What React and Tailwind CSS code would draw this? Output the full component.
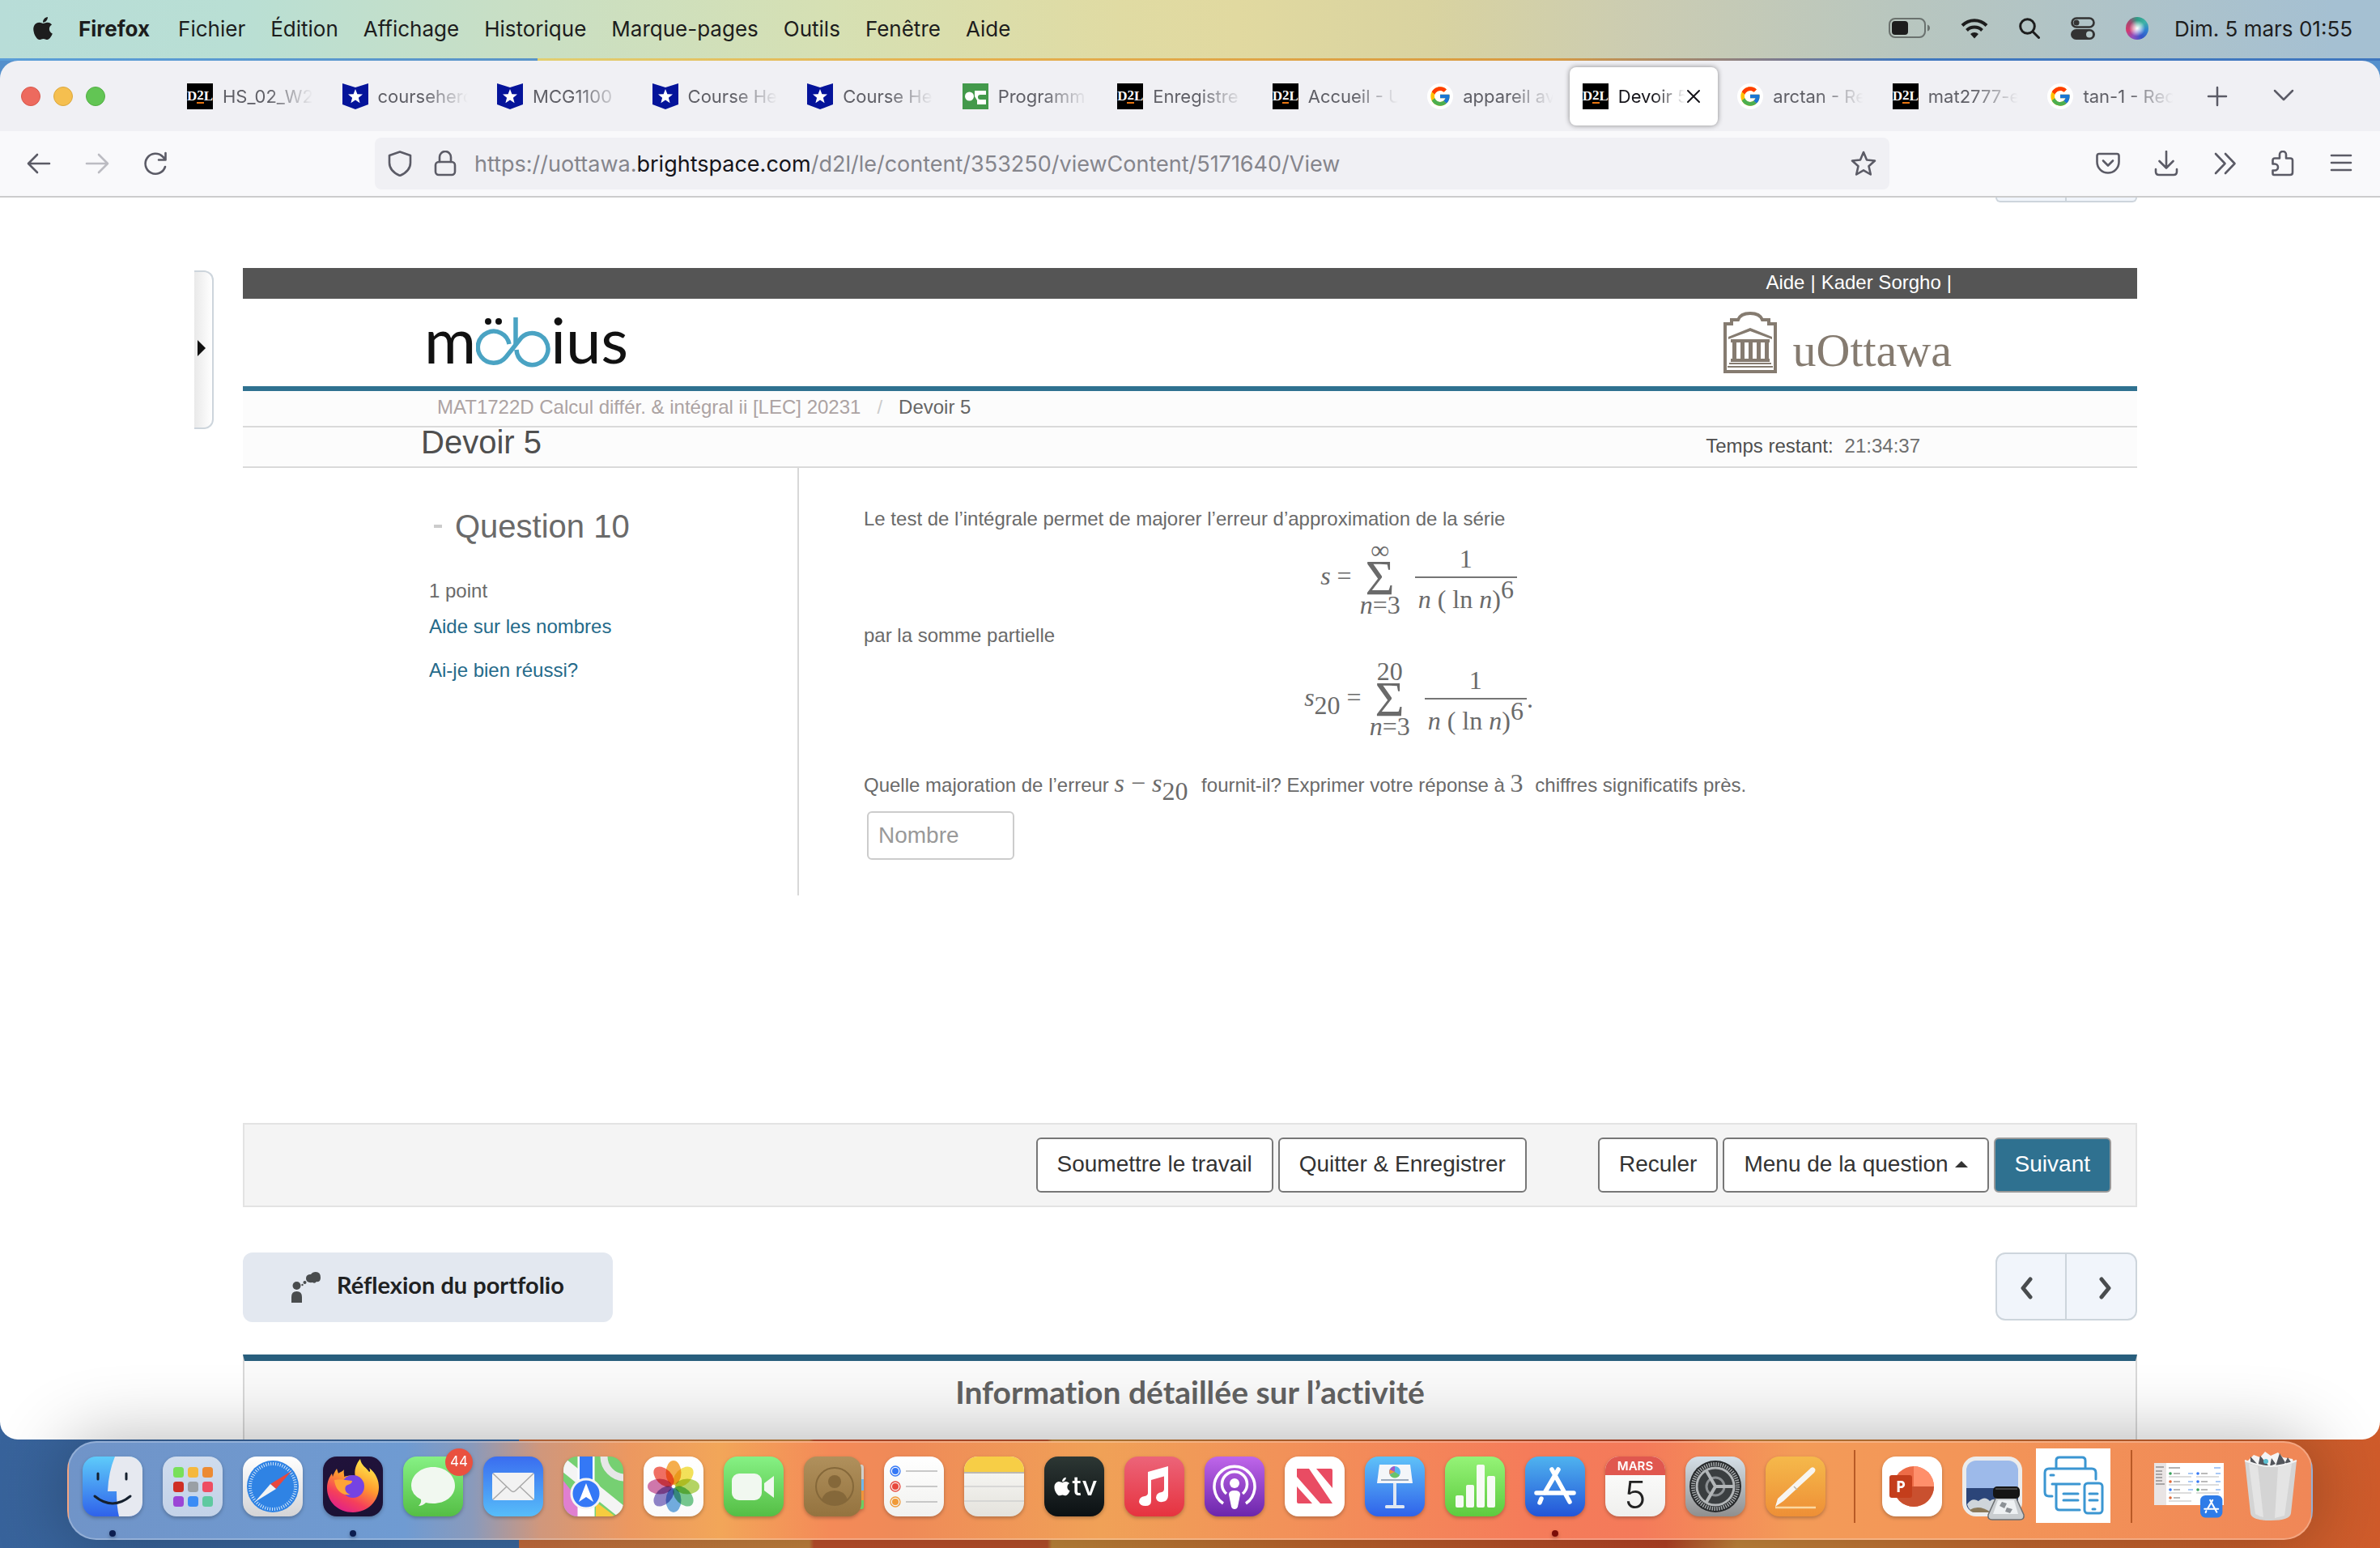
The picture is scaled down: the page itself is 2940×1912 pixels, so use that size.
import React, { useState } from 'react'
import { FaApple } from 'react-icons/fa'
import { FcGoogle } from 'react-icons/fc'

const MENUS = ['Fichier', 'Édition', 'Affichage', 'Historique', 'Marque-pages', 'Outils', 'Fenêtre', 'Aide']

const TABS = [
  { icon: 'd2l', title: 'HS_02_W2' },
  { icon: 'hero', title: 'coursehero' },
  { icon: 'hero', title: 'MCG1100' },
  { icon: 'hero', title: 'Course He' },
  { icon: 'hero', title: 'Course He' },
  { icon: 'prog', title: 'Programm' },
  { icon: 'd2l', title: 'Enregistre' },
  { icon: 'd2l', title: 'Accueil - U' },
  { icon: 'google', title: 'appareil av' },
  { icon: 'd2l', title: 'Devoir 5' },
  { icon: 'google', title: 'arctan - Re' },
  { icon: 'd2l', title: 'mat2777-e' },
  { icon: 'google', title: 'tan-1 - Rec' },
]

const line = { fill: 'none', stroke: 'currentColor', strokeLinecap: 'round', strokeLinejoin: 'round' }

/* ---------- menu bar ---------- */

function StatusIcons() {
  return (
    <div className="flex items-center gap-[38px]">
      <svg width="51" height="26" viewBox="0 0 51 26">
        <rect x="1" y="1" width="44" height="23" rx="7" fill="none" stroke="#1d1d1d" strokeOpacity="0.5" strokeWidth="2" />
        <rect x="4" y="4" width="20" height="17" rx="4" fill="#1d1d1d" />
        <path d="M48 8.500q3 1 3 4t-3 4z" fill="#1d1d1d" fillOpacity="0.5" />
      </svg>
      <svg width="34" height="26" viewBox="0 0 34 26" fill="none" stroke="#1d1d1d" strokeWidth="4">
        <path d="M2 9.500a21 21 0 0 1 30 0" />
        <path d="M7.500 15.500a13.500 13.500 0 0 1 19 0" />
        <path d="M17 25.500l-5-5.500a7 7 0 0 1 10 0z" fill="#1d1d1d" stroke="none" />
      </svg>
      <svg width="26" height="26" viewBox="0 0 26 26" {...line} stroke="#1d1d1d" strokeWidth="3">
        <circle cx="10.500" cy="10.500" r="8.800" />
        <path d="M17 17l7.500 7.500" />
      </svg>
      <svg width="30" height="28" viewBox="0 0 30 28">
        <rect x="1.500" y="1.500" width="27" height="11" rx="5.500" fill="none" stroke="#333" strokeWidth="2.600" />
        <circle cx="7" cy="7" r="3.500" fill="#333" />
        <rect x="0" y="15" width="30" height="13" rx="6.500" fill="#333" />
        <circle cx="23" cy="21.500" r="4" fill="#b3c5c6" />
      </svg>
      <span className="size-7 rounded-full bg-[radial-gradient(circle_at_50%_50%,#fff_0,#ffffff88_25%,transparent_50%),conic-gradient(#2d9c86,#3fb3a8,#2f7fd0,#3552c8,#8d4fc0,#d33a6e,#a5476f,#2d9c86)]" />
    </div>
  )
}

function MenuBar() {
  return (
    <header className="flex h-[72px] items-center bg-[linear-gradient(to_right,#b8ddd8_0%,#b9dfd4_10%,#c9dfc4_22%,#d6e0b3_35%,#e0dba3_47%,#e1d9a0_52%,#d9d3a0_60%,#cbccb2_69%,#b8c6bf_80%,#a5c0d2_98%)] pb-0.5 pl-[37px] pr-[34px] font-['Inter',sans-serif] text-[26px] text-[#1d1d1d]">
      <FaApple className="size-8" />
      <nav className="ml-7 flex gap-[31px]">
        <b className="mr-1 font-bold">Firefox</b>
        {MENUS.map(m => <span key={m}>{m}</span>)}
      </nav>
      <div className="ml-auto flex items-center gap-8">
        <StatusIcons />
        <span>Dim. 5 mars 01:55</span>
      </div>
    </header>
  )
}

/* ---------- browser chrome ---------- */

function Favicon({ kind }) {
  if (kind === 'google') return (
    <span className="flex size-8 shrink-0 items-center justify-center rounded-full bg-white"><FcGoogle className="size-7" /></span>
  )
  if (kind === 'hero') return (
    <svg className="size-8 shrink-0" viewBox="0 0 32 32">
      <path d="M0 0l16 5L32 0v26l-16 6L0 26z" fill="#05149a" />
      <path d="M16 7l2.400 6.200 6.600.3-5.100 4.200 1.700 6.500L16 20.500l-5.600 3.700 1.700-6.500L7 13.500l6.600-.3z" fill="#fff" />
    </svg>
  )
  if (kind === 'prog') return (
    <svg className="size-8 shrink-0" viewBox="0 0 32 32">
      <rect width="32" height="32" fill="#43994b" />
      <circle cx="8.500" cy="16" r="5.500" fill="#fff" />
      <path d="M15 9h14v5h-7a3 3 0 0 0 0 6h7v6H18v-5l-3-5z" fill="#fff" />
    </svg>
  )
  return (
    <span className="flex size-8 shrink-0 items-center justify-center bg-black font-['Liberation_Serif',serif] text-[17px] font-bold leading-none text-white">
      D<span className="border-b-2 border-[#e87511]">2</span>L
    </span>
  )
}

function TabStrip() {
  const [active, setActive] = useState(9)
  return (
    <div className="flex h-[87px] items-center bg-[#f0f0f4] pl-[26px] font-['Inter',sans-serif] text-[22px] text-[#5f5f66]">
      <div className="flex gap-4">
        <span className="size-6 rounded-full border border-[#d8574b] bg-[#ed6a5e]" />
        <span className="size-6 rounded-full border border-[#dba73d] bg-[#f5bf4f]" />
        <span className="size-6 rounded-full border border-[#52ae43] bg-[#62c554]" />
      </div>
      <div role="tablist" className="ml-[85px] flex max-w-[2490px] flex-1">
        {TABS.map((t, i) => (
          <div key={i} className="min-w-0 flex-1 pr-2">
            <button role="tab" aria-selected={i === active} onClick={() => setActive(i)}
              className={`flex h-[72px] w-full items-center gap-3 rounded-lg pl-4 ${i === active ? 'bg-white pr-5 text-[#15141a] shadow-[0_0_6px_rgba(0,0,0,0.45)]' : 'pr-3'}`}>
              <Favicon kind={t.icon} />
              <span className="min-w-0 flex-1 overflow-hidden whitespace-nowrap pt-0.5 text-left [mask-image:linear-gradient(to_right,#000_50%,transparent)]">{t.title}</span>
              {i === active && <svg className="-ml-3 size-5 shrink-0" viewBox="0 0 20 20" {...line} strokeWidth="2"><path d="M3 3l14 14M17 3L3 17" /></svg>}
            </button>
          </div>
        ))}
      </div>
      <div className="flex w-[235px] items-center gap-[54px] pl-5 text-[#5b5b66]">
        <svg className="size-7" viewBox="0 0 28 28" {...line} strokeWidth="2.500"><path d="M14 3v22M3 14h22" /></svg>
        <svg className="size-7" viewBox="0 0 28 28" {...line} strokeWidth="2.500"><path d="M3 7l11 11L25 7" /></svg>
      </div>
    </div>
  )
}

function Tool({ label, children, dim }) {
  return (
    <button aria-label={label} className={dim ? 'text-[#bcbcc2]' : 'text-[#5b5b66]'}>
      <svg className="size-8" viewBox="0 0 32 32" {...line} strokeWidth="2.600">{children}</svg>
    </button>
  )
}

function Toolbar() {
  return (
    <div className="flex h-[82px] items-center border-b-2 border-[#cccccd] bg-[#f9f9fb] pl-8 pr-8">
      <div className="flex w-[431px] gap-10">
        <Tool label="Précédent"><path d="M29 16H4M14 5L3 16l11 11" /></Tool>
        <Tool label="Suivant" dim><path d="M3 16h25M18 5l11 11-11 11" /></Tool>
        <Tool label="Actualiser"><path d="M28 20A12.500 12.500 0 1 1 25 7.500l3 3M28.500 3v8.500H20" /></Tool>
      </div>
      <div className="flex h-16 w-[1871px] items-center gap-6 rounded-lg bg-[#f0f0f4] pl-[15px] pr-4">
        <Tool label="Protection"><path d="M16 1.500L29 6v9c0 7-5 12.500-13 16C8 27.500 3 22 3 15V6z" /></Tool>
        <Tool label="Connexion sécurisée"><rect x="4" y="14" width="24" height="16" rx="4" /><path d="M9 14V8a7 7 0 0 1 14 0v6" /></Tool>
        <div className="-ml-1 flex-1 pt-0.5 font-['Inter',sans-serif] text-[27px] text-[#85858c]">
          https://uottawa.<span className="text-[#15141a]">brightspace.com</span>/d2l/le/content/353250/viewContent/5171640/View
        </div>
        <Tool label="Marquer cette page"><path d="M16 2l4 9.500 10 1-7.500 6.800 2.300 10.200L16 24.300 7.200 29.500l2.300-10.200L2 12.500l10-1z" /></Tool>
      </div>
      <div className="ml-auto flex gap-10">
        <Tool label="Pocket"><path d="M5 4h22q2.500 0 2.500 2.500V14a13.500 13.500 0 0 1-27 0V6.500Q2.500 4 5 4zM10 12.500l6 6 6-6" /></Tool>
        <Tool label="Téléchargements"><path d="M16 1v20M7.500 13l8.500 8.500 8.500-8.500M3 23v3q0 4 4 4h18q4 0 4-4v-3" /></Tool>
        <Tool label="Plus d’outils"><path d="M5 4l11.500 12L5 28M17 4l11.500 12L17 28" /></Tool>
        <Tool label="Extensions"><path d="M5 30h20q3 0 3-3V12q0-2.500-3-2.500h-5V5a4 4 0 0 0-8 0v4.500H6q-2.500 0-2.500 2.500v4.500H6a4 4 0 0 1 0 8H3.500V28q0 2 1.500 2z" /></Tool>
        <Tool label="Menu"><path d="M4 6h24M4 15h24M4 24h24" /></Tool>
      </div>
    </div>
  )
}

/* ---------- Möbius page ---------- */

function MobiusLogo() {
  return (
    <div className="flex h-24 items-center font-['Lato',sans-serif] text-[78px] leading-none text-[#111]">
      <span className="pb-2">m</span>
      <svg width="92" height="96" viewBox="0 0 92 96" fill="none" stroke="#4aa3c3" strokeWidth="5.500">
        <path d="M41 50A19.500 19.500 0 1 0 37 66L56 42A19.500 19.500 0 1 1 50 57" />
        <path d="M49 17v34" />
        <circle cx="15" cy="22" r="4" fill="#111" stroke="none" />
        <circle cx="28" cy="22" r="4" fill="#111" stroke="none" />
      </svg>
      <span className="pb-2">ius</span>
    </div>
  )
}

function OttawaLogo() {
  return (
    <div className="flex items-end gap-5 text-[#857b70]">
      <svg width="66" height="76" viewBox="0 0 66 76" fill="currentColor">
        <path d="M2 74V15h8v-5h8q3-8 15-8t15 8h8v5h8v59z" fill="none" stroke="currentColor" strokeWidth="4" />
        <path d="M6 31L33 20l27 11v3L33 24 6 34zM9 34h48v4H9zM9 58h48v4H9zM7 63h52v2H7zM5 67h56v2H5z" />
        <path d="M11 38h5v20h-5zM21 38h5v20h-5zM31 38h5v20h-5zM41 38h5v20h-5zM51 38h5v20h-5z" />
      </svg>
      <span className="font-['Liberation_Serif',serif] text-[58px] leading-[56px]">uOttawa</span>
    </div>
  )
}

function Sum({ from, to }) {
  return (
    <span className="flex flex-col items-center">
      <span className="leading-[26px]">{to}</span>
      <span className="text-[62px] leading-[42px]">Σ</span>
      <span className="leading-[26px]">{from}</span>
    </span>
  )
}

function Term() {
  return (
    <span className="ml-[18px] flex flex-col items-center pt-1">
      <span className="mb-2 leading-7">1</span>
      <span className="h-0.5 w-full bg-[#757575]" />
      <span className="mt-3 px-1 leading-7"><i>n</i> ( ln <i>n</i>)<sup className="-top-3 text-[32px]">6</sup></span>
    </span>
  )
}

function Formula({ children, to, end }) {
  return (
    <div className="flex h-28 items-center justify-center font-['Liberation_Serif',serif] text-[32px]">
      <span className="mr-2.5 pb-1">{children} =</span>
      <Sum to={to} from={<><i>n</i>=3</>} />
      <Term />
      {end}
    </div>
  )
}

function Action({ children, primary }) {
  return (
    <button className={`h-[68px] rounded-md border-2 px-6 pb-0.5 ${primary ? 'border-[#999] bg-[#2f7190] text-white' : 'border-[#777] bg-white text-[#333]'}`}>
      {children}
    </button>
  )
}

function Question() {
  return (
    <section className="flex text-2xl leading-8 text-[#6a6a6a]">
      <aside className="h-[528px] w-[687px] shrink-0 border-r-2 border-[#d8d8d8] pl-[230px] pt-12">
        <h2 className="flex items-center gap-4 text-[40px] leading-[48px]">
          <span className="ml-1.5 h-1 w-2.5 bg-[#ccc]" />Question 10
        </h2>
        <p className="mt-10">1 point</p>
        <p className="mt-3"><a href="#nombres" className="text-[#256a8a]">Aide sur les nombres</a></p>
        <p className="mt-[22px]"><a href="#verif" className="text-[#256a8a]">Ai-je bien réussi?</a></p>
      </aside>
      <div className="flex-1 pl-20 pr-[202px] pt-[47px]">
        <p>Le test de l’intégrale permet de majorer l’erreur d’approximation de la série</p>
        <Formula to="∞"><i>s</i></Formula>
        <p className="mb-1.5">par la somme partielle</p>
        <Formula to="20" end="."><i>s</i><sub className="-bottom-2.5 text-[32px]">20</sub></Formula>
        <p className="mt-8 whitespace-nowrap">
          Quelle majoration de l’erreur{' '}
          <span className="font-['Liberation_Serif',serif] text-[32px] leading-8"><i>s</i> − <i>s</i><sub className="-bottom-2.5 text-[32px]">20</sub></span>
          {' '}<label htmlFor="rep" className="ml-2.5">fournit-il? Exprimer votre réponse à </label>
          <span className="mr-2 font-['Liberation_Serif',serif] text-[32px] leading-8">3</span> chiffres significatifs près.
        </p>
        <input id="rep" placeholder="Nombre" className="ml-1 mt-4 h-[60px] w-[182px] rounded-md border-2 border-[#ccc] px-3 text-[28px] placeholder:text-[#999]" />
      </div>
    </section>
  )
}

function Page() {
  return (
    <main className="flex flex-1 flex-col bg-white font-['Liberation_Sans',Arial,sans-serif]">
      <div className="relative mx-auto flex w-full max-w-[2340px] flex-1 flex-col">
        <button aria-label="Ouvrir le panneau" className="absolute -left-[60px] top-[90px] flex h-[196px] w-6 items-center rounded-r-xl border-2 border-l-0 border-[#cdd5dc] bg-linear-to-r from-[#e9e9e9] to-white pb-1 pl-1">
          <svg width="10" height="20" viewBox="0 0 10 20"><path d="M0 0l10 10L0 20z" fill="#111" /></svg>
        </button>
        <div className="flex h-1.5 w-[175px] self-end rounded-b-lg border-2 border-t-0 border-[#cdd5dc] bg-[#f1f5fb]">
          <span className="w-1/2 border-r-2 border-[#cdd5dc]" />
        </div>
        <div className="mt-[81px] flex h-[38px] items-center justify-end bg-[#555] pb-0.5 pr-[229px] text-2xl text-white">
          <a href="#aide">Aide</a><span className="mx-[7px]">|</span><a href="#profil">Kader Sorgho</a><span className="ml-[7px]">|</span>
        </div>
        <div className="flex h-[114px] items-center justify-between border-b-6 border-[#2f7190] pl-[224px] pr-[229px]">
          <MobiusLogo />
          <OttawaLogo />
        </div>
        <nav className="flex h-[45px] items-center border-b-2 border-[#dadada] bg-[#fcfcfc] pb-1 pl-60 text-2xl text-[#aca3a3]">
          <a href="#cours">MAT1722D Calcul différ. &amp; intégral ii [LEC] 20231</a>
          <span className="mx-5 text-[#ccc]">/</span>
          <span className="text-[#666]">Devoir 5</span>
        </nav>
        <div className="flex h-[50px] items-center justify-between border-b-2 border-[#dadada] bg-[#fcfcfc] pl-[220px] pr-[268px] text-2xl text-[#4f4f4f]">
          <h1 className="pb-3 text-[40px] leading-10">Devoir 5</h1>
          <p className="pb-0.5">Temps restant:<span className="ml-3.5 text-[#6f6f6f]">21:34:37</span></p>
        </div>
        <Question />
        <div className="mt-[281px] flex h-[104px] items-center justify-end gap-1.5 border-2 border-[#e3e3e3] bg-[#f4f4f4] pr-[30px] text-[28px]">
          <Action>Soumettre le travail</Action>
          <Action>Quitter &amp; Enregistrer</Action>
          <span className="w-[76px]" />
          <Action>Reculer</Action>
          <Action>
            <span className="flex items-center gap-2">Menu de la question
              <svg width="16" height="8" viewBox="0 0 16 8"><path d="M0 8l8-8 8 8z" fill="#333" /></svg>
            </span>
          </Action>
          <Action primary>Suivant</Action>
        </div>
        <div className="mt-14 flex items-start justify-between font-['Lato',sans-serif]">
          <button className="flex h-[86px] items-center gap-5 rounded-xl bg-[#e3e8f0] px-[60px] text-[29px] font-bold text-[#202122]">
            <svg width="36" height="38" viewBox="0 0 36 38" fill="#494c4e">
              <circle cx="6.500" cy="17" r="5" />
              <path d="M0 38V31q0-7 6.500-7t6.500 7v7zM18 8q0-5 6-5 2-3 6-3 6 0 6 7 0 6-5 5-2 3-5 1-8 1-8-5z" />
              <circle cx="16.500" cy="13" r="2" /><circle cx="13.500" cy="16" r="1.200" />
            </svg>
            <span className="pb-1.5 [font-variant-ligatures:none]">Réflexion du portfolio</span>
          </button>
          <div className="flex rounded-xl border-2 border-[#cdd5dc] bg-[#f1f5fb] text-[#494c4e]">
            <button aria-label="Page précédente" className="flex h-20 w-[86px] items-center justify-center border-r-2 border-[#cdd5dc]">
              <svg className="mt-1 size-7" viewBox="0 0 28 28" {...line} strokeWidth="5"><path d="M13 3L4 14l9 11" /></svg>
            </button>
            <button aria-label="Page suivante" className="flex h-20 w-[85px] items-center justify-center">
              <svg className="mt-1 size-7" viewBox="0 0 28 28" {...line} strokeWidth="5"><path d="M14 3l9 11-9 11" /></svg>
            </button>
          </div>
        </div>
        <div className="mt-10 flex-1 border-x-2 border-t-8 border-x-[#d8d8d8] border-t-[#285e7d] bg-[#fafafa] pt-3.5 text-center">
          <h2 className="font-['Lato',sans-serif] text-[39px] font-bold leading-[48px] text-[#626262] [font-variant-ligatures:none]">Information détaillée sur l’activité</h2>
        </div>
      </div>
    </main>
  )
}

/* ---------- dock ---------- */

function Grad({ id, a, b }) {
  return (
    <>
      <defs><linearGradient id={id} x1="0" y1="0" x2="0" y2="1"><stop stopColor={a} /><stop offset="1" stopColor={b} /></linearGradient></defs>
      <rect width="74" height="74" rx="17" fill={`url(#${id})`} />
    </>
  )
}

const GRID = ['#78e05a', '#f5b83d', '#ec8a33', '#cf2f25', '#9aa0a5', '#ee4e62', '#9b45d6', '#3b8cf5', '#5fc9a0']
const PETALS = ['#f5a02e', '#f2dd3d', '#a9cf4a', '#5fbf7d', '#5aa0dc', '#7d6fc0', '#c9609f', '#ee5648']

function AppStoreMark() {
  return (
    <g stroke="#fff" strokeWidth="5.500" strokeLinecap="round">
      <path d="M41 16L24 45M33 16l22 40M14 45h46M20 52l-2 5" />
    </g>
  )
}

const APPS = [
  { name: 'Finder', dot: 'bg-[#0b1d4f]', art: <>
    <Grad id="finder" a="#5ecbfa" b="#2f62ea" />
    <path d="M40 0h17a17 17 0 0 1 17 17v40a17 17 0 0 1-17 17H45q-3-12-3-31H31q1-24 9-43z" fill="#e6e9f0" />
    <path d="M19 21v7M54 21v7" stroke="#15202e" strokeWidth="3" strokeLinecap="round" />
    <path d="M15 49q22 18 44 0" fill="none" stroke="#15202e" strokeWidth="3" strokeLinecap="round" />
  </> },
  { name: 'Launchpad', art: <>
    <Grad id="launch" a="#cfdcee" b="#c3d2e8" />
    {GRID.map((c, i) => <rect key={c} x={13 + (i % 3) * 18} y={13 + Math.floor(i / 3) * 18} width="13" height="13" rx="3.500" fill={c} />)}
  </> },
  { name: 'Safari', art: <>
    <Grad id="safari" a="#ffffff" b="#d4d4d6" />
    <circle cx="37" cy="37" r="32" fill="#2f83e4" />
    <circle cx="37" cy="37" r="28" fill="none" stroke="#d7e9fb" strokeWidth="4" strokeDasharray="1 1.930" />
    <path d="M60 18L41 40l-7-6z" fill="#e8483d" /><path d="M15 56l19-22 7 6z" fill="#f3f3f3" />
  </> },
  { name: 'Firefox', dot: 'bg-[#0b1d4f]', art: <>
    <Grad id="ffbg" a="#20123a" b="#1b1235" />
    <defs><linearGradient id="ff" x1="0.800" y1="0" x2="0.300" y2="1"><stop stopColor="#fff44f" /><stop offset="0.450" stopColor="#ff9a2e" /><stop offset="0.750" stopColor="#f5405a" /><stop offset="1" stopColor="#e0208a" /></linearGradient></defs>
    <path d="M46 3c1 8 8 11 11 16 2 0 1-3 0-5 9 7 12 16 12 24 0 17-14 31-32 31S5 56 5 39c0-8 3-14 6-18l1 4c1-4 3-7 5-10l2 6c2-2 5-2 7-5-1 5 1 8 0 9 6-2 10-2 14 0-2-8 1-16 6-22z" fill="url(#ff)" />
    <circle cx="37" cy="37" r="14" fill="#7543e3" />
    <path d="M14 29c8-2 13 0 22 1 0 5-6 4-8 7-2 4 1 9 6 10-12 2-19-7-20-18z" fill="#ffa436" />
  </> },
  { name: 'Messages', badge: '44', art: <>
    <Grad id="msg" a="#86f184" b="#55be45" />
    <path d="M37 13c15 0 27 10 27 23S52 58 37 58q-5 0-9-1-4 4-9 4 4-4 3-8-12-6-12-17c0-13 12-23 27-23z" fill="#f1f8f0" />
  </> },
  { name: 'Mail', art: <>
    <Grad id="mail" a="#3a6df0" b="#57bdf9" />
    <rect x="11" y="20" width="52" height="34" rx="3" fill="#f2f2f2" />
    <path d="M12 21l22 21q3 3 6 0l22-21M12 53l17-16M62 53L45 37" fill="none" stroke="#a9a9a9" strokeWidth="1.500" />
  </> },
  { name: 'Plans', art: <>
    <defs><clipPath id="sq"><rect width="74" height="74" rx="17" /></clipPath></defs>
    <g clipPath="url(#sq)">
      <rect width="74" height="74" fill="#76d072" />
      <path d="M0 30l35 44H0z" fill="#e07fd0" /><path d="M40 56l24 18H40z" fill="#f6cc3f" />
      <path d="M0 10l74 60" stroke="#f4f4f4" strokeWidth="15" />
      <circle cx="76" cy="0" r="26" fill="none" stroke="#e7e7e7" strokeWidth="9" />
      <path d="M28 0v74" stroke="#fff" strokeWidth="21" /><path d="M28 0v40" stroke="#3478f6" strokeWidth="16" />
    </g>
    <circle cx="28" cy="46" r="18" fill="#3478f6" stroke="#f4f4f4" strokeWidth="3" />
    <path d="M28 33l9 23-9-6-9 6z" fill="#fff" />
  </> },
  { name: 'Photos', art: <>
    <Grad id="photos" a="#ffffff" b="#fafafa" />
    {PETALS.map((c, i) => <ellipse key={c} cx="37" cy="20" rx="9.500" ry="15" fill={c} fillOpacity="0.850" transform={`rotate(${i * 45} 37 37)`} style={{ mixBlendMode: 'multiply' }} />)}
  </> },
  { name: 'FaceTime', art: <>
    <Grad id="face" a="#86f184" b="#55be45" />
    <rect x="10" y="21" width="37" height="33" rx="9" fill="#f1f8f0" /><path d="M50 33l12-9v27l-12-9z" fill="#f1f8f0" />
  </> },
  { name: 'Contacts', art: <>
    <path d="M60 10h11q3 0 3 4v14H60z" fill="#cfd0cc" /><path d="M60 28h14v14H60z" fill="#6fb8ec" />
    <path d="M60 42h14v12H60z" fill="#f0953a" /><path d="M60 54h14v8q0 3-3 3H60z" fill="#6ccf63" />
    <defs><linearGradient id="contacts" x1="0" y1="0" x2="0" y2="1"><stop stopColor="#b0905c" /><stop offset="1" stopColor="#94733f" /></linearGradient></defs>
    <rect width="71" height="74" rx="16" fill="url(#contacts)" />
    <circle cx="38" cy="37" r="23" fill="none" stroke="#85683a" strokeWidth="2" />
    <circle cx="38" cy="31" r="8" fill="#85683a" /><path d="M22 53q4-11 16-11t16 11q-7 7-16 7t-16-7z" fill="#85683a" />
  </> },
  { name: 'Rappels', art: <>
    <Grad id="remind" a="#ffffff" b="#f1f1ef" />
    {['#3478f6', '#e8483d', '#f09a37'].map((c, i) => <g key={c}>
      <circle cx="14" cy={18 + i * 19} r="4" fill={c} /><circle cx="14" cy={18 + i * 19} r="6" fill="none" stroke={c} strokeWidth="1.300" />
      <path d={`M27 ${18 + i * 19}h39`} stroke="#b9b9b9" strokeWidth="1.600" />
    </g>)}
  </> },
  { name: 'Notes', art: <>
    <Grad id="notes" a="#fbfbf9" b="#e4e2dc" />
    <path d="M0 19v-2A17 17 0 0 1 17 0h40a17 17 0 0 1 17 17v2z" fill="#f7ce46" />
    <path d="M0 20h74" stroke="#a8a59a" strokeWidth="1.500" /><path d="M0 37h74M0 55h74" stroke="#cfcfcf" strokeWidth="1.500" />
  </> },
  { name: 'TV', label: 'tv', art: <Grad id="tv" a="#2d3734" b="#0b1013" /> },
  { name: 'Musique', art: <>
    <Grad id="music" a="#ec6479" b="#e6333f" />
    <path d="M29 19l25-7v11l-21 6v26q0 6-7 6t-8-5q0-6 7-7 4-1 4-4zM49 23h5v25q0 7-7 8t-8-5q0-6 7-7 3-1 3-4z" fill="#fff" />
  </> },
  { name: 'Podcasts', art: <>
    <Grad id="pod" a="#bf66ea" b="#6c26ab" />
    <g fill="none" stroke="#fff" strokeWidth="3.500"><path d="M23 58a25 25 0 1 1 28 0" /><path d="M27 46a15.500 15.500 0 1 1 20 0" /></g>
    <circle cx="37" cy="33" r="6" fill="#fff" /><path d="M30 47q0-5 7-5t7 5l-3 15q-1 3-4 3t-4-3z" fill="#fff" />
  </> },
  { name: 'News', art: <>
    <Grad id="news" a="#ffffff" b="#ffffff" />
    <path d="M15 15h15l29 43H44L15 25zM39 15h18q2 0 2 2v22zM15 37l19 21H17q-2 0-2-2z" fill="#e94c63" />
  </> },
  { name: 'Keynote', art: <>
    <Grad id="key" a="#5fc2f8" b="#2f62ea" />
    <path d="M37 32v28" stroke="#dfe7f2" strokeWidth="4" /><rect x="25" y="60" width="24" height="4" rx="1.500" fill="#dfe7f2" />
    <path d="M18 10h38l3 23H15z" fill="#f4f6f9" /><path d="M20 28h34v2H20z" fill="#9aa9bd" />
    <circle cx="37" cy="19" r="7" fill="#57b4f0" /><path d="M37 19v-7a7 7 0 0 0-6 10z" fill="#a259c9" /><path d="M37 19l-6 4a7 7 0 0 0 12 0z" fill="#6ac46a" /><path d="M37 19l-6.500-3v6z" fill="#f09a37" />
  </> },
  { name: 'Numbers', art: <>
    <Grad id="num" a="#95f377" b="#5dcb3f" />
    <g fill="#f6fbf4"><rect x="13" y="48" width="10" height="15" rx="2" /><rect x="26" y="35" width="10" height="28" rx="2" /><rect x="39" y="10" width="10" height="53" rx="2" /><rect x="52" y="24" width="10" height="39" rx="2" /></g>
  </> },
  { name: 'App Store', dot: 'bg-[#7a0d08]', art: <><Grad id="store" a="#4fb3ef" b="#2355d8" /><AppStoreMark /></> },
  { name: 'Calendrier', calendar: true, art: <>
    <Grad id="cal" a="#ffffff" b="#efefed" />
    <path d="M0 23v-6A17 17 0 0 1 17 0h40a17 17 0 0 1 17 17v6z" fill="#e0574f" />
  </> },
  { name: 'Réglages', art: <>
    <Grad id="set" a="#d5e0e8" b="#8f8f8f" />
    <circle cx="37" cy="37" r="32" fill="#26292b" /><circle cx="37" cy="37" r="27.500" fill="none" stroke="#a3a7a9" strokeWidth="5" strokeDasharray="1.500 1.380" />
    <circle cx="37" cy="37" r="23" fill="#3a3e40" stroke="#b2b6b8" strokeWidth="3" />
    <circle cx="37" cy="37" r="11" fill="none" stroke="#8b8f92" strokeWidth="3" />
    <path d="M37 37h23M37 37L25.500 17M37 37L25.500 57" stroke="#b2b6b8" strokeWidth="4" />
  </> },
  { name: 'Pages', art: <>
    <Grad id="pages" a="#f5b94b" b="#ee8f36" />
    <path d="M12 63h50" stroke="#fbd8a0" strokeWidth="2.500" />
    <path d="M12 62l3-10 39-36q3-4 6-2t0 6L22 55z" fill="#f7f5f1" /><path d="M35 37l4 4" stroke="#b8b3a8" strokeWidth="1.500" />
  </> },
]

function DockApp({ app }) {
  return (
    <button aria-label={app.name} className="relative size-[74px] drop-shadow-[0_2px_2px_rgba(0,0,0,0.25)]">
      <svg className="size-full" viewBox="0 0 74 74">{app.art}</svg>
      {app.label && <span className="absolute inset-0 flex items-center justify-center font-['Inter',sans-serif] text-[33px] font-medium text-white"><FaApple className="size-[26px]" />{app.label}</span>}
      {app.calendar && (
        <span className="absolute inset-0 flex flex-col items-center font-['Inter',sans-serif]">
          <span className="text-[15px] font-semibold leading-6 text-white">MARS</span>
          <span className="text-[46px] font-light leading-[46px] text-[#222]">5</span>
        </span>
      )}
      {app.badge && <span className="absolute -right-3 -top-2.5 flex size-[34px] items-center justify-center rounded-full bg-[#e9513f] font-['Inter',sans-serif] text-[17px] text-white">{app.badge}</span>}
      {app.dot && <span className={`absolute -bottom-[25px] left-[33px] size-2 rounded-full ${app.dot}`} />}
    </button>
  )
}

function Dock() {
  return (
    <footer className="relative z-10 mx-auto mb-2.5 mt-0.5 flex h-[122px] items-center gap-[25px] rounded-[36px] border-2 border-white/25 bg-[linear-gradient(to_right,#7094c8_0%,#6f9bd2_15%,#8a9abb_18%,#d0977c_21%,#ec9860_25%,#f2a659_29%,#f48a58_34%,#ef8a58_37%,#f0a157_46%,#f29259_54%,#f57c5a_65%,#f47a5a_70%,#f39b58_77%,#f39558_85%,#f08757_100%)] px-[17px] pb-[10px] shadow-[0_0_90px_rgba(0,0,0,0.3)]">
      {APPS.map(a => <DockApp key={a.name} app={a} />)}
      <span className="ml-2.5 mr-2 h-[90px] w-0.5 bg-[#b85a26]" />
      <button aria-label="PowerPoint" className="relative size-[74px] drop-shadow-[0_2px_2px_rgba(0,0,0,0.25)]">
        <svg className="size-full" viewBox="0 0 74 74">
          <rect width="74" height="74" rx="17" fill="#fff" />
          <circle cx="39" cy="37" r="25" fill="#ed6c47" /><path d="M39 12a25 25 0 0 1 25 25H39z" fill="#ff8f6b" /><path d="M14 37h50a25 25 0 0 1-50 0z" fill="#c9502f" />
          <rect x="9" y="23" width="28" height="28" rx="3" fill="#c43e1c" />
        </svg>
        <span className="absolute left-[17px] top-6 font-['Open_Sans',sans-serif] text-[19px] font-bold leading-[26px] text-white">P</span>
      </button>
      <button aria-label="Aperçu" className="h-[74px] w-[78px]">
        <svg className="size-full overflow-visible" viewBox="0 0 78 74">
          <rect width="74" height="74" rx="17" fill="#ececec" />
          <rect x="5" y="5" width="64" height="64" rx="12" fill="#9dbaea" />
          <path d="M5 39h64v18a12 12 0 0 1-12 12H17A12 12 0 0 1 5 57z" fill="#2b4579" />
          <path d="M6 59q6-9 14-4 8-7 14 0 6-5 10 1v13H17Q8 68 6 59z" fill="#cfd5da" /><path d="M9 66q12-7 26 3H16q-5 0-7-3z" fill="#8a795a" />
          <path d="M42 50h24l10 22q1 6-5 6H37q-6 0-5-6z" fill="#c9cdd0" stroke="#6b6e70" strokeWidth="1.500" />
          <path d="M44 54h20l5 17H38z" fill="#eef1f3" /><path d="M49 56l6 2-3 6-6-3zM55 63l7 2-3 5-6-2z" fill="#8c9196" />
          <rect x="38" y="37" width="33" height="15" rx="5" fill="#151515" /><path d="M41 40h27" stroke="#555" strokeWidth="1.500" />
        </svg>
      </button>
      <button aria-label="Imprimante" className="-ml-3 -mt-0.5 h-[92px] w-[92px] bg-white">
        <svg className="size-full" viewBox="0 0 92 92" fill="none" stroke="#3b96d2" strokeWidth="3" strokeLinecap="round">
          <path d="M25 24v-9q0-4 4-4h28q4 0 4 4v9M20 59h-4q-5 0-5-5V30q0-5 5-5h53q5 0 5 5v8M20 44h34M25 44v28q0 4 4 4h25M18 33h4M34 56h18M34 64h18" />
          <rect x="60" y="43" width="22" height="37" rx="4" /><path d="M66 56h10M66 64h10M70 75h3" />
        </svg>
      </button>
      <span className="h-[90px] w-0.5 bg-[#b85a26]" />
      <button aria-label="Fenêtre App Store réduite" className="ml-0.5 w-[86px] pt-2.5">
        <svg className="w-full" viewBox="0 0 86 68">
          <rect width="86" height="52" fill="#fff" /><rect width="15" height="52" fill="#e9e4e4" />
          <path d="M18 6h14M2 5h10M2 10h8M2 14h8M2 18h8M2 22h8M2 26h11" stroke="#666" strokeWidth="1" />
          <path d="M24 13h8M24 23h8M24 33h8M24 43h8M58 13h8M58 23h8M58 33h8" stroke="#777" strokeWidth="1.200" />
          <path d="M18 17h28M52 17h28M18 27h28M52 27h28M18 37h28M52 37h28M18 47h28" stroke="#bbb" strokeWidth="1" />
          <path d="M74 6h8M42 13h6M76 13h6M42 23h6M76 23h6M42 33h6M76 33h6" stroke="#8db8f4" strokeWidth="1.500" />
          <g fill="#38a05a"><circle cx="20" cy="13" r="1.800" /><circle cx="54" cy="33" r="1.800" /></g>
          <g fill="#e06a3a"><circle cx="20" cy="23" r="1.800" /><circle cx="20" cy="43" r="1.800" /></g>
          <g fill="#3478f6"><circle cx="54" cy="13" r="1.800" /><circle cx="54" cy="23" r="1.800" /><circle cx="20" cy="33" r="1.800" /></g>
          <g transform="translate(57 40) scale(0.370)"><rect width="74" height="74" rx="17" fill="#2f7ce8" /><AppStoreMark /></g>
        </svg>
      </button>
      <button aria-label="Corbeille" className="h-[86px] w-[66px]">
        <svg className="size-full" viewBox="0 0 66 86">
          <path d="M4 12l8-8 8 3 6-7 7 5 9-4 6 6 12 2 2 8-8 4H10z" fill="#f4f4f4" />
          <path d="M8 6l8 9-8 3zM20 5l10 12-13 2zM44 2l-5 16 13-3zM54 7l6 9-12 3zM34 8l5 7-7 3z" fill="#53565c" /><circle cx="27" cy="12" r="3" fill="#5bbfd0" />
          <path d="M1 11q32 14 64 0l-7 65q-1 9-25 9T8 76z" fill="#d4d4d4" />
          <path d="M6 15l8 62q5 3 10 4L17 18zM42 19l-4 63 12-3 9-64z" fill="#e4e4e4" />
          <path d="M1 11q32 14 64 0" fill="none" stroke="#f2f2f2" strokeWidth="2" />
        </svg>
      </button>
    </footer>
  )
}

export default function App() {
  return (
    <div className="flex min-h-screen flex-col overflow-hidden bg-[linear-gradient(#5590cc,#5590cc),linear-gradient(to_right,#38639b_0%,#3d6ca5_21.800%,#cc7040_21.800%,#c8863f_34%,#c4522d_34.200%,#bd522c_44%,#c58a3c_44.200%,#c4692f_55%,#ba4427_70%,#c98a3e_73%,#c96a31_85%,#cf5b2b_100%)] bg-[length:100%_140px,100%_100%] bg-no-repeat">
      <MenuBar />
      <div className="h-[3px] bg-[linear-gradient(to_right,#5a9ed8_0%,#5a94c8_22.600%,#e2cf70_22.600%,#e6b04e_40%,#d99a40_65%,#7b7a90_75%,#3f77bf_80%)]" />
      <div className="flex flex-1 flex-col overflow-hidden rounded-[22px]">
        <TabStrip />
        <Toolbar />
        <Page />
      </div>
      <Dock />
    </div>
  )
}
